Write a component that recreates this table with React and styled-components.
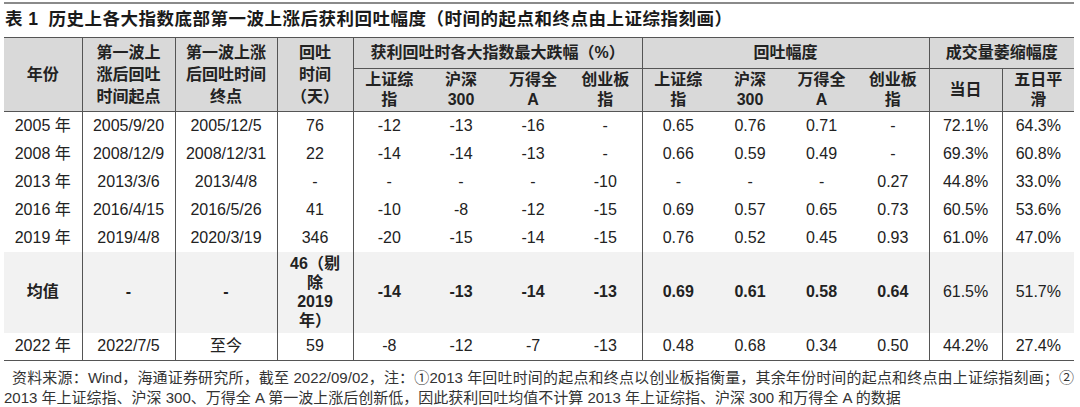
import styled, { createGlobalStyle } from 'styled-components';

const GlobalStyle = createGlobalStyle`
  body {
    margin: 0;
    background: #ffffff;
    font-family: "Liberation Sans", "Noto Sans CJK SC", sans-serif;
    color: #222222;
  }
`;

const colWidths = [78, 93, 102, 76, 72, 72, 72, 73, 72, 72, 71, 72, 73, 72];

const rows = [
  ['2005 年', '2005/9/20', '2005/12/5', '76', '-12', '-13', '-16', '-', '0.65', '0.76', '0.71', '-', '72.1%', '64.3%'],
  ['2008 年', '2008/12/9', '2008/12/31', '22', '-14', '-14', '-13', '-', '0.66', '0.59', '0.49', '-', '69.3%', '60.8%'],
  ['2013 年', '2013/3/6', '2013/4/8', '-', '-', '-', '-', '-10', '-', '-', '-', '0.27', '44.8%', '33.0%'],
  ['2016 年', '2016/4/15', '2016/5/26', '41', '-10', '-8', '-12', '-15', '0.69', '0.57', '0.65', '0.73', '60.5%', '53.6%'],
  ['2019 年', '2019/4/8', '2020/3/19', '346', '-20', '-15', '-14', '-15', '0.76', '0.52', '0.45', '0.93', '61.0%', '47.0%'],
];

const lastRow = ['2022 年', '2022/7/5', '至今', '59', '-8', '-12', '-7', '-13', '0.48', '0.68', '0.34', '0.50', '44.2%', '27.4%'];

// columns that start a bordered block
const leftEdge = new Set([1, 2, 3, 4, 8, 12, 13]);

function App() {
  return (
    <Page>
      <GlobalStyle />
      <TopRule />
      <Title>
        <TitleNo>表 1</TitleNo>历史上各大指数底部第一波上涨后获利回吐幅度（时间的起点和终点由上证综指刻画）
      </Title>
      <Table>
        <colgroup>
          {colWidths.map((w, i) => (
            <col key={i} style={{ width: w }} />
          ))}
        </colgroup>
        <thead>
          <HeadRow $h={31}>
            <HeadCell rowSpan={2}>年份</HeadCell>
            <HeadCell rowSpan={2} $left $tall>第一波上<br />涨后回吐<br />时间起点</HeadCell>
            <HeadCell rowSpan={2} $left $tall>第一波上涨<br />后回吐时间<br />终点</HeadCell>
            <HeadCell rowSpan={2} $left $tall>回吐<br />时间<br />（天）</HeadCell>
            <HeadCell colSpan={4} $left $under>获利回吐时各大指数最大跌幅（%）</HeadCell>
            <HeadCell colSpan={4} $left $under>回吐幅度</HeadCell>
            <HeadCell colSpan={2} $left $under>成交量萎缩幅度</HeadCell>
          </HeadRow>
          <HeadRow $h={43}>
            <HeadCell $left>上证综<br />指</HeadCell>
            <HeadCell>沪深<br />300</HeadCell>
            <HeadCell>万得全<br />A</HeadCell>
            <HeadCell>创业板<br />指</HeadCell>
            <HeadCell $left>上证综<br />指</HeadCell>
            <HeadCell>沪深<br />300</HeadCell>
            <HeadCell>万得全<br />A</HeadCell>
            <HeadCell>创业板<br />指</HeadCell>
            <HeadCell $left>当日</HeadCell>
            <HeadCell $left>五日平<br />滑</HeadCell>
          </HeadRow>
        </thead>
        <tbody>
          {rows.map((r) => (
            <Row key={r[0]} $h={28}>
              {r.map((v, i) => (
                <Cell key={i} $left={leftEdge.has(i)}>{v}</Cell>
              ))}
            </Row>
          ))}
          <Row $h={81} $shade>
            <Cell $bold>均值</Cell>
            <Cell $left $bold>-</Cell>
            <Cell $left $bold>-</Cell>
            <Cell $left $bold $stack>46（剔<br />除<br />2019<br />年）</Cell>
            <Cell $left $bold>-14</Cell>
            <Cell $bold>-13</Cell>
            <Cell $bold>-14</Cell>
            <Cell $bold>-13</Cell>
            <Cell $left $bold>0.69</Cell>
            <Cell $bold>0.61</Cell>
            <Cell $bold>0.58</Cell>
            <Cell $bold>0.64</Cell>
            <Cell $left>61.5%</Cell>
            <Cell $left>51.7%</Cell>
          </Row>
          <Row $h={28} $last>
            {lastRow.map((v, i) => (
              <Cell key={i} $left={leftEdge.has(i)}>{v}</Cell>
            ))}
          </Row>
        </tbody>
      </Table>
      <Note>
        <NoteLine $full $indent>
          资料来源：Wind，海通证券研究所，截至 2022/09/02，注：①2013 年回吐时间的起点和终点以创业板指衡量，其余年份时间的起点和终点由上证综指刻画；②
        </NoteLine>
        <NoteLine>
          2013 年上证综指、沪深 300、万得全 A 第一波上涨后创新低，因此获利回吐均值不计算 2013 年上证综指、沪深 300 和万得全 A 的数据
        </NoteLine>
      </Note>
    </Page>
  );
}

const Page = styled.div`
  width: 1070px;
  padding-left: 4px;
  padding-top: 2px;
`;

const TopRule = styled.div`
  height: 2px;
  background: #8a8a8a;
`;

const Title = styled.div`
  height: 33px;
  line-height: 31px;
  font-size: 17.5px;
  font-weight: 700;
  letter-spacing: 0.5px;
  color: #1a1a1a;
  white-space: nowrap;
`;

const TitleNo = styled.span`
  margin-right: 10px;
  margin-left: 1px;
`;

const Table = styled.table`
  width: 1070px;
  table-layout: fixed;
  border-collapse: collapse;
  border-top: 1px solid #555555;
  font-size: 16px;
`;

const HeadRow = styled.tr`
  height: ${(p) => p.$h}px;
  background: #d9d9d9;
  &:last-child {
    border-bottom: 1px solid #555555;
  }
`;

const HeadCell = styled.th`
  padding: 0;
  font-weight: 700;
  font-size: 16px;
  line-height: ${(p) => (p.$tall ? 22 : 20)}px;
  text-align: center;
  vertical-align: middle;
  color: #222222;
  border-left: ${(p) => (p.$left ? '1px solid #555555' : 'none')};
  border-bottom: ${(p) => (p.$under ? '1px solid #555555' : 'none')};
  white-space: nowrap;
`;

const Row = styled.tr`
  height: ${(p) => p.$h}px;
  background: ${(p) => (p.$shade ? '#f2f2f2' : '#ffffff')};
  border-bottom: ${(p) => (p.$last ? '1px solid #555555' : 'none')};
`;

const Cell = styled.td`
  padding: 0;
  text-align: center;
  vertical-align: middle;
  font-weight: ${(p) => (p.$bold ? 700 : 400)};
  line-height: ${(p) => (p.$stack ? 19 : 20)}px;
  border-left: ${(p) => (p.$left ? '1px solid #555555' : 'none')};
  white-space: nowrap;
`;

const Note = styled.div`
  margin-top: 7px;
  font-size: 15px;
  line-height: 20px;
  color: #333333;
`;

const NoteLine = styled.div`
  white-space: nowrap;
  text-indent: ${(p) => (p.$indent ? 8 : 0)}px;
  text-align: ${(p) => (p.$full ? 'justify' : 'left')};
  text-align-last: ${(p) => (p.$full ? 'justify' : 'left')};
`;

export default App;
